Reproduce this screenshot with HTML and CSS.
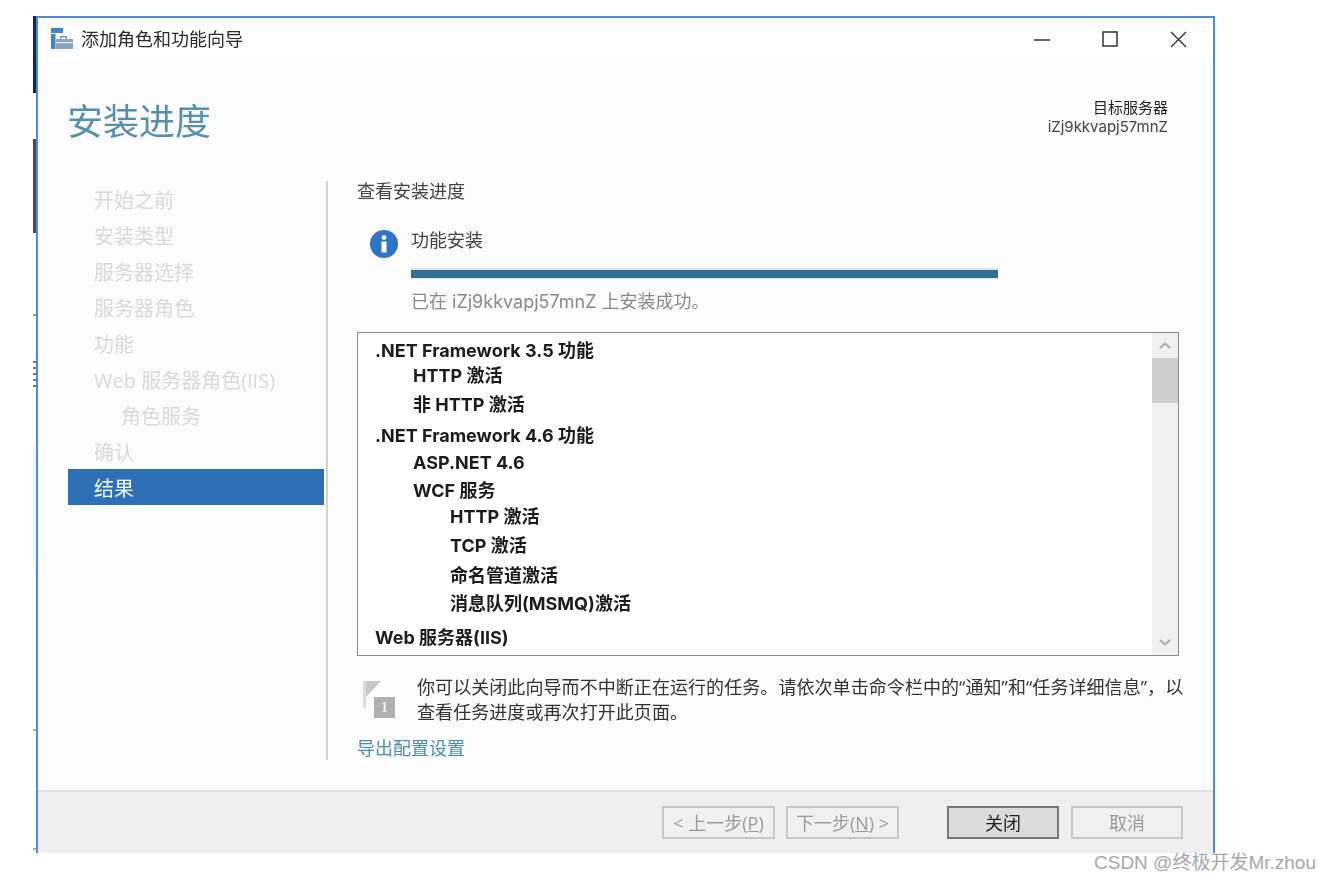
FILE: index.html
```html
<!DOCTYPE html>
<html lang="zh-CN">
<head>
<meta charset="utf-8">
<title>添加角色和功能向导</title>
<link rel="stylesheet" href="styles.css">
</head>
<body>
<div class="backdrop-strip">
  <i class="mark mark-navy"></i>
  <i class="mark mark-dark"></i>
  <i class="mark mark-tick1"></i>
  <i class="mark mark-tick2"></i>
  <i class="mark mark-tick3"></i>
  <i class="mark mark-tick4"></i>
  <i class="mark mark-tick5"></i>
</div>
<div class="window">
  <header class="titlebar">
    <svg class="app-icon" width="22" height="22" viewBox="0 0 22 22">
      <rect x="0" y="0" width="12" height="5" fill="#3f86c8"/>
      <rect x="0" y="6" width="4.500" height="15" fill="#3f86c8"/>
      <path d="M5 11h16a1 1 0 0 1 1 1v9H5z" fill="#8aa5bb"/>
      <path d="M9 11V8h7v3h-1.500V9.500h-4V11z" fill="#7d99b0"/>
      <rect x="5" y="14" width="17" height="1.200" fill="#dfe7ee"/>
    </svg>
    <span class="title-text">添加角色和功能向导</span>
    <div class="controls">
      <svg class="ctl ctl-min" width="16" height="16" viewBox="0 0 16 16"><path d="M0 8h16" stroke="#333" stroke-width="1.500"/></svg>
      <svg class="ctl ctl-max" width="16" height="16" viewBox="0 0 16 16"><rect x="1" y="1" width="14" height="14" fill="none" stroke="#333" stroke-width="1.500"/></svg>
      <svg class="ctl ctl-close" width="17" height="17" viewBox="0 0 17 17"><path d="M1 1l15 15M16 1L1 16" stroke="#333" stroke-width="1.400"/></svg>
    </div>
  </header>
  <main class="main">
    <div class="head">
      <h1 class="page-title">安装进度</h1>
      <div class="target">
        <div class="target-label">目标服务器</div>
        <div class="target-name">iZj9kkvapj57mnZ</div>
      </div>
    </div>
    <div class="body">
      <nav class="nav">
        <div class="nav-item">开始之前</div>
        <div class="nav-item">安装类型</div>
        <div class="nav-item">服务器选择</div>
        <div class="nav-item">服务器角色</div>
        <div class="nav-item">功能</div>
        <div class="nav-item">Web 服务器角色(IIS)</div>
        <div class="nav-item nav-sub">角色服务</div>
        <div class="nav-item">确认</div>
        <div class="nav-item nav-active">结果</div>
      </nav>
      <section class="pane">
        <div class="pane-title">查看安装进度</div>
        <div class="status">
          <svg class="info-icon" width="28" height="28" viewBox="0 0 28 28">
            <circle cx="14" cy="14" r="14" fill="#2f74c6"/>
            <circle cx="14" cy="7.500" r="2.400" fill="#fff"/>
            <rect x="11.500" y="11.500" width="5" height="11" fill="#fff"/>
          </svg>
          <div class="status-col">
            <div class="status-name">功能安装</div>
            <div class="progress"><div class="progress-fill"></div></div>
            <div class="status-result">已在 iZj9kkvapj57mnZ 上安装成功。</div>
          </div>
        </div>
        <div class="listbox">
          <div class="list">
            <div class="row">.NET Framework 3.5 功能</div>
            <div class="row lv1 dy-n3">HTTP 激活</div>
            <div class="row lv1 dy-1">非 HTTP 激活</div>
            <div class="row dy-3">.NET Framework 4.6 功能</div>
            <div class="row lv1 dy-n1">ASP.NET 4.6</div>
            <div class="row lv1">WCF 服务</div>
            <div class="row lv2 dy-n2">HTTP 激活</div>
            <div class="row lv2 dy-1">TCP 激活</div>
            <div class="row lv2 dy-2">命名管道激活</div>
            <div class="row lv2">消息队列(MSMQ)激活</div>
            <div class="row dy-6">Web 服务器(IIS)</div>
          </div>
          <div class="scrollbar">
            <div class="sb-btn"><svg width="12" height="7" viewBox="0 0 12 7"><path d="M1 6l5-4.500L11 6" fill="none" stroke="#a8a8a8" stroke-width="1.800"/></svg></div>
            <div class="sb-thumb"></div>
            <div class="sb-track"></div>
            <div class="sb-btn"><svg width="12" height="7" viewBox="0 0 12 7"><path d="M1 1l5 4.500L11 1" fill="none" stroke="#a8a8a8" stroke-width="1.800"/></svg></div>
          </div>
        </div>
        <div class="note">
          <svg class="flag-icon" width="33" height="38" viewBox="0 0 33 38">
            <path d="M1 1h3v27H1z" fill="#dcdcdc"/>
            <path d="M4 1h15L4 17z" fill="#c8c8c8"/>
            <rect x="12" y="17" width="21" height="21" fill="#b0b0b0"/>
          </svg>
          <span class="flag-num">1</span>
          <p class="note-text">你可以关闭此向导而不中断正在运行的任务。请依次单击命令栏中的“通知”和“任务详细信息”，以<br>查看任务进度或再次打开此页面。</p>
        </div>
        <a class="link">导出配置设置</a>
      </section>
    </div>
  </main>
  <footer class="footer">
    <button class="btn btn-off">&lt; 上一步(<u>P</u>)</button>
    <button class="btn btn-off btn-next">下一步(<u>N</u>) &gt;</button>
    <button class="btn btn-default">关闭</button>
    <button class="btn btn-off btn-cancel">取消</button>
  </footer>
</div>
<div class="watermark">CSDN @终极开发Mr.zhou</div>
</body>
</html>
```
FILE: styles.css
```css
* { box-sizing: border-box; }
html, body { margin: 0; height: 881px; overflow: hidden; background: #fff; }
body {
  font-family: "Open Sans", "Noto Sans CJK SC", sans-serif;
  font-size: 18px;
  color: #333;
  position: relative;
}
.backdrop-strip { position: absolute; left: 33px; top: 16px; width: 3px; height: 837px; }
.mark { position: absolute; left: 0; width: 3px; display: block; }
.mark-navy { top: 0; height: 77px; background: #0c2a55; }
.mark-dark { top: 123px; height: 94px; background: #45484d; }
.mark-tick1 { top: 298px; height: 2px; background: #999; }
.mark-tick2 { top: 345px; height: 30px; background: repeating-linear-gradient(#777 0 2px, #fff 2px 6px); }
.mark-tick3 { top: 430px; height: 120px; background: #f4f4f4; }
.mark-tick4 { top: 713px; height: 2px; background: #aaa; }
.mark-tick5 { top: 832px; height: 2px; background: #aaa; }

.window {
  position: absolute;
  left: 36px;
  top: 16px;
  width: 1179px;
  height: 837px;
  border: 2px solid #4d8ae0;
  border-bottom: 0;
  display: flex;
  flex-direction: column;
  background: #fcfcfc;
  filter: blur(0.4px);
}
.titlebar {
  height: 44px;
  flex: none;
  background: #fff;
  display: flex;
  align-items: center;
  padding-left: 13px;
}
.app-icon { flex: none; margin-top: -3px; }
.title-text { margin-left: 8px; color: #2b2b2b; line-height: 24px; margin-top: -3px; }
.controls { margin-left: auto; display: flex; align-items: center; padding-right: 26px; }
.ctl { display: block; }
.ctl-max { margin-left: 52px; margin-top: -2px; }
.ctl-close { margin-left: 52px; margin-top: -2px; }

.main { flex: 1; display: flex; flex-direction: column; min-height: 0; }
.head {
  height: 119px;
  flex: none;
  display: flex;
  justify-content: space-between;
  padding: 0 45px 0 29px;
}
.page-title {
  margin: 0;
  font-size: 36px;
  font-weight: 400;
  line-height: 119px;
  color: #5590ac;
}
.target {
  padding-top: 36px;
  text-align: right;
  line-height: 19px;
  color: #444;
}
.target-label { color: #222; font-size: 15px; }
.target-name { font-family: "Inter", "Noto Sans CJK SC", sans-serif; font-size: 15px; }
.body { flex: 1; display: flex; min-height: 0; }
.nav {
  width: 290px;
  flex: none;
  height: 579px;
  border-right: 2px solid #d0d0d0;
  padding: 0 2px 0 30px;
  font-size: 20px;
  color: #d9d9d9;
}
.nav-item { height: 36px; line-height: 40px; padding-left: 26px; white-space: nowrap; }
.nav-sub { padding-left: 53px; }
.nav-active { background: #2e70b6; color: #f4f8fc; }

.pane { flex: 1; padding-left: 29px; min-width: 0; }
.pane-title { line-height: 20px; color: #444; }
.status { display: flex; padding-left: 13px; margin-top: 28px; }
.info-icon { flex: none; margin-top: 1px; }
.status-col { margin-left: 13px; width: 587px; }
.status-name { line-height: 22px; color: #444; }
.progress { height: 11px; margin-top: 17px; background: #e2e2e2; padding: 2px 0 1px; }
.progress-fill { height: 100%; background: #2f7094; }
.status-result {
  margin-top: 11px;
  line-height: 24px;
  color: #8a8a8a;
  font-family: "Inter", "Noto Sans CJK SC", sans-serif;
}

.listbox {
  margin-top: 18px;
  width: 822px;
  height: 324px;
  border: 1px solid #8c8c8c;
  background: #fff;
  display: flex;
}
.list { flex: 1; min-width: 0; padding: 4px 0 0 17px; overflow: hidden; }
.row {
  height: 28px;
  line-height: 28px;
  font-family: "Inter", "Noto Sans CJK SC", sans-serif;
  font-weight: 700;
  color: #1c1c1c;
  white-space: nowrap;
}
.lv1 { padding-left: 38px; }
.lv2 { padding-left: 75px; }
.dy-n3 { margin-top: -3px; }
.dy-n2 { margin-top: -2px; }
.dy-n1 { margin-top: -1px; }
.dy-1 { margin-top: 1px; }
.dy-2 { margin-top: 2px; }
.dy-3 { margin-top: 3px; }
.dy-6 { margin-top: 6px; }
.scrollbar { width: 26px; flex: none; background: #f0f0f0; display: flex; flex-direction: column; }
.sb-btn { height: 25px; flex: none; display: flex; align-items: center; justify-content: center; }
.sb-thumb { height: 45px; flex: none; background: #cdcdcd; }
.sb-track { flex: 1; }

.note { position: relative; display: flex; margin-top: 19px; }
.flag-icon { flex: none; margin: 5px 0 0 5px; }
.flag-num {
  position: absolute;
  left: 17px;
  top: 22px;
  width: 21px;
  height: 21px;
  line-height: 21px;
  text-align: center;
  font-family: "Liberation Serif", serif;
  font-size: 15px;
  font-weight: 700;
  color: #eee;
}
.note-text { margin: 0 0 0 22px; line-height: 25px; color: #333; white-space: nowrap; letter-spacing: 0.07px; }
.link { display: block; margin-top: 11px; line-height: 24px; color: #4a8db4; }

.footer {
  height: 63px;
  flex: none;
  background: #efefef;
  border-top: 2px solid #e2e2e2;
  padding: 14px 30px 0 0;
  display: flex;
  justify-content: flex-end;
  align-items: flex-start;
}
.btn {
  width: 113px;
  height: 33px;
  padding: 0 0 2px;
  font: inherit;
  border: 2px solid #c6c6c6;
  background: #f0f0f0;
  white-space: nowrap;
}
.btn-off { color: #9a9a9a; }
.btn-next { margin-left: 11px; }
.btn-default { width: 112px; margin-left: 48px; background: #dcdcdc; border-color: #777; color: #222; }
.btn-cancel { width: 112px; margin-left: 12px; }

.watermark {
  position: absolute;
  left: 1094px;
  top: 851px;
  line-height: 24px;
  font-family: "Liberation Sans", "Noto Sans CJK SC", sans-serif;
  font-size: 19px;
  color: #a8a8a8;
  white-space: nowrap;
}
```
